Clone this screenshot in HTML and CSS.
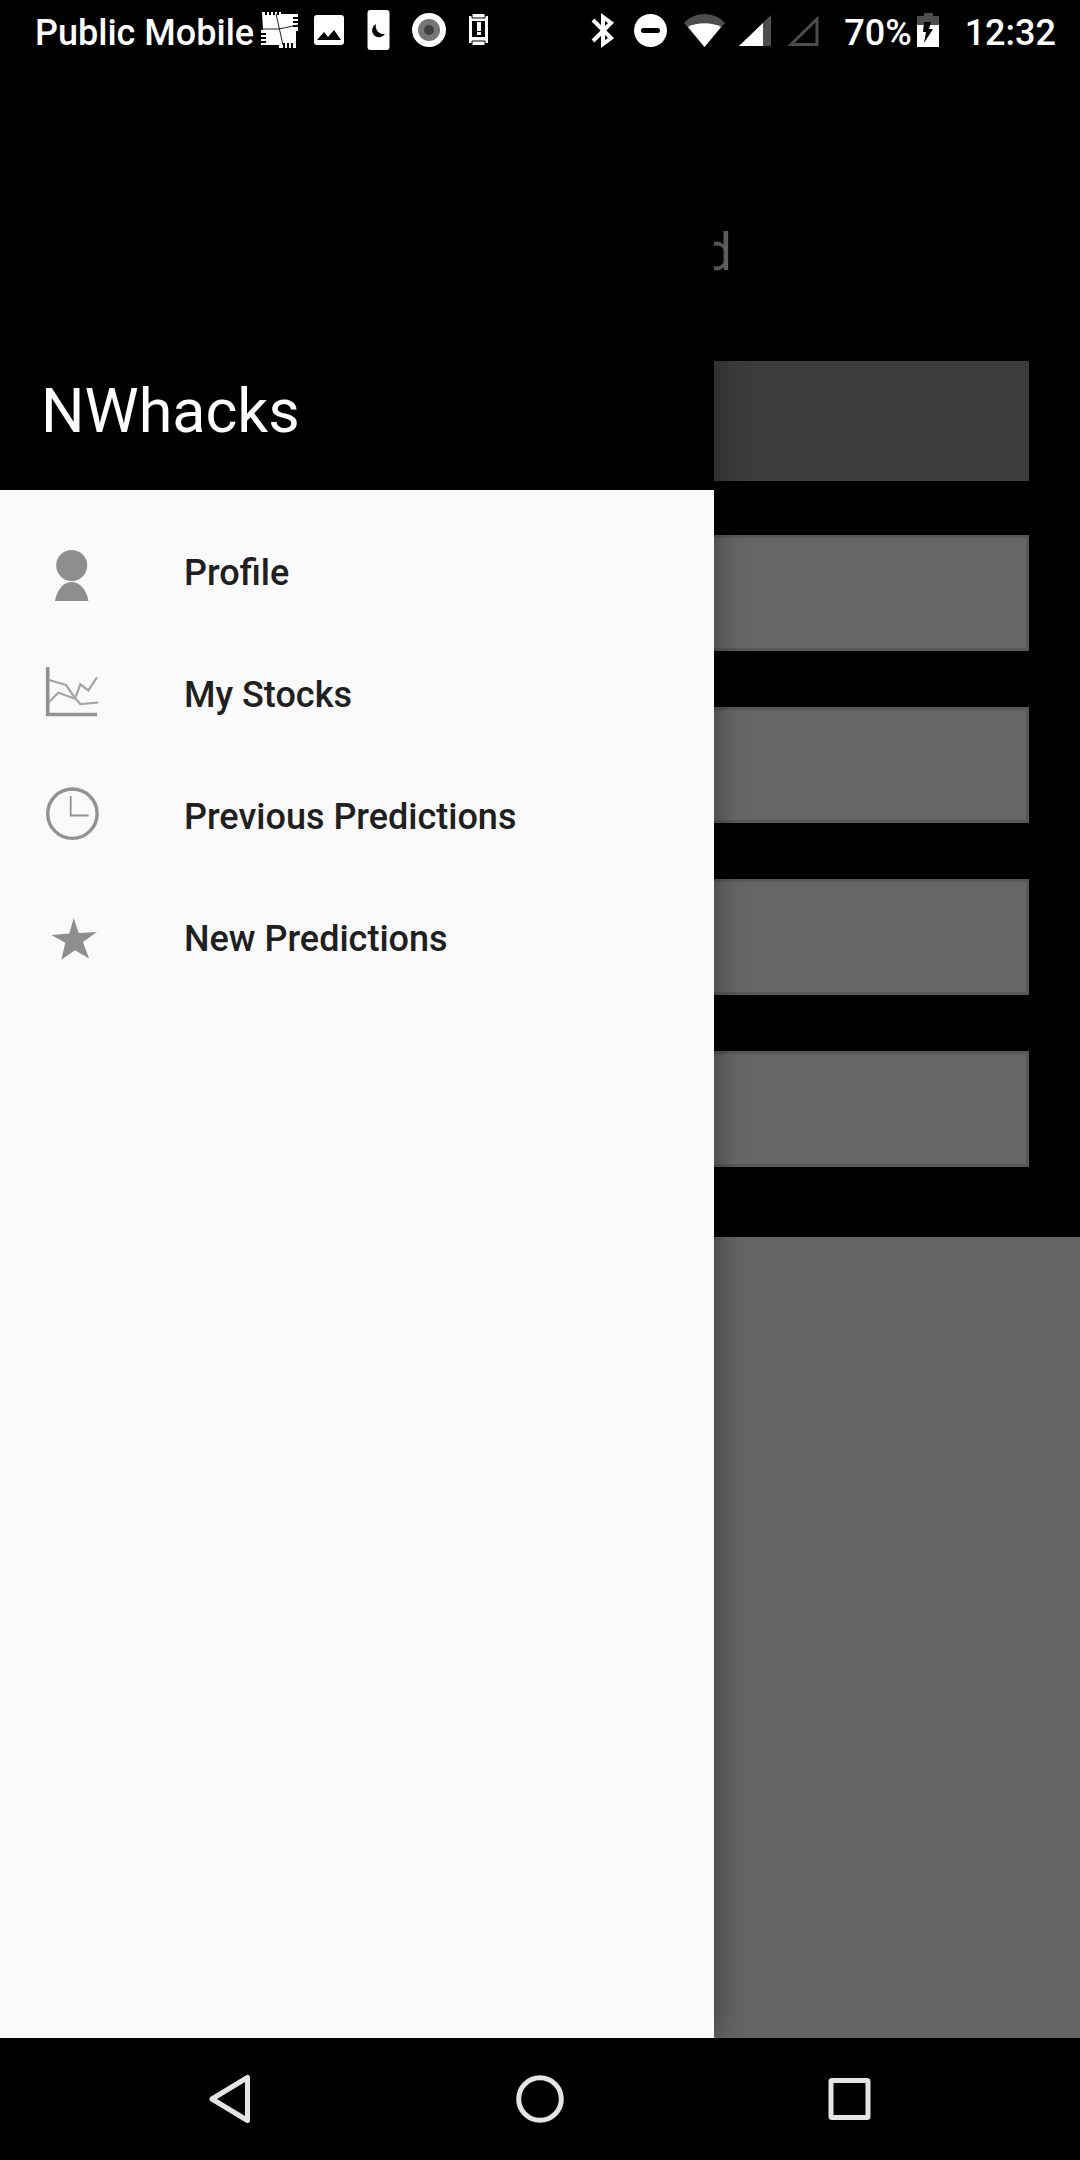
FILE: index.html
```html
<!DOCTYPE html>
<html lang="en">
<head>
<meta charset="utf-8">
<meta name="viewport" content="width=device-width, initial-scale=1">
<title>NWhacks</title>
<link rel="stylesheet" href="styles.css">
</head>
<body>
<header class="status">
  <div class="status-group">
    <span>Public Mobile</span>
    <svg class="status-icon" viewBox="254 0 50 64" aria-hidden="true">
      <path fill="#fff" d="M262 12h3v3h2v-3h2v3h2v-3h2v3h2v-3h2v3h2v-3h2v2h17v3h-5v2h5v2h-5v2h5v2h-5v2h5v4h-2v17h-3v-5h-2v5h-2v-5h-2v5h-2v-5h-2v5h-4v-3h-18v-2h5v-2h-5v-2h5v-2h-5v-2h5v-2h-5v-3h2z"/>
      <path fill="none" stroke="#222" d="M276 14l7 31M261 29h18l19-4"/>
    </svg>
    <svg class="status-icon" viewBox="304 0 50 64" aria-hidden="true">
      <rect x="314" y="15" width="30" height="30" rx="3" fill="#fff"/><path d="M317 40l7-8 4 5 6-7 7 10z"/>
    </svg>
    <svg class="status-icon" viewBox="354 0 50 64" aria-hidden="true">
      <rect x="367.500" y="10" width="22" height="40" rx="3" fill="#fff"/><path d="M376 24a7 7 0 1 0 9 10a8 8 0 0 1-9-10z"/>
    </svg>
    <svg class="status-icon" viewBox="404 0 50 64" aria-hidden="true">
      <circle cx="429" cy="30" r="17" fill="#fff"/><circle cx="429" cy="30" r="11" fill="#757575"/><circle cx="429" cy="30" r="5" fill="#404040"/>
    </svg>
    <svg class="status-icon" viewBox="454 0 50 64" aria-hidden="true">
      <path fill="#fff" d="M472 14h13v2h3v27h-3v2h-13v-2h-3v-27h3z"/>
      <path d="M472 21h13v16h-13z"/><path fill="none" stroke="#000" d="M472 14v4h13v-4M472 45v-4h13v4"/>
      <path fill="#fff" d="M477 22h4v9h-4zM477 32h4v3h-4z"/>
    </svg>
  </div>
  <div class="status-group">
    <svg class="status-icon" viewBox="578 0 50 64" aria-hidden="true">
      <path fill="none" stroke="#fff" stroke-width="4" d="M593 20l18 18-8 6V17l8 6-18 18"/>
    </svg>
    <svg class="status-icon" viewBox="628 0 50 64" aria-hidden="true">
      <circle cx="650.5" cy="30.500" r="16.500" fill="#fff"/><path stroke="#000" stroke-width="5" stroke-linecap="round" d="M643.500 30.500h14"/>
    </svg>
    <svg class="status-icon" viewBox="678 0 50 64" aria-hidden="true">
      <path fill="#4d4d4d" d="M684 23c11-12 30-12 41 0l-20.500 24z"/><path fill="#fff" d="M688 27c9-5 24-5 33 0l-16.500 20z"/>
    </svg>
    <svg class="status-icon" viewBox="728 0 50 64" aria-hidden="true">
      <path fill="#4d4d4d" d="M771 15v31h-32z"/><path fill="#fff" d="M763 23v23h-24z"/>
    </svg>
    <svg class="status-icon" viewBox="778 0 50 64" aria-hidden="true">
      <path fill="none" stroke="#4d4d4d" stroke-width="3" d="M817 19v25.500h-26z"/>
    </svg>
    <span class="battery">70%
      <svg class="battery-icon" viewBox="916 0 24 64" aria-hidden="true">
        <path fill="#4d4d4d" d="M924 13h9v3h6v10h-22v-10h7z"/><path fill="#fff" d="M917 25h22v22h-22z"/><path d="M924 22h7l-2 7h4l-9 14 2-11h-3z"/>
      </svg>
    </span>
    <time class="clock">12:32</time>
  </div>
</header>

<main class="screen">
  <form class="panel">
    <h1 class="panel-title">d</h1>
    <button class="panel-button" type="button" aria-label="Select"></button>
    <div class="fields">
      <input class="field" type="text" aria-label="Field 1">
      <input class="field" type="text" aria-label="Field 2">
      <input class="field" type="text" aria-label="Field 3">
      <input class="field" type="text" aria-label="Field 4">
    </div>
  </form>

  <aside class="drawer">
    <div class="drawer-header">NWhacks</div>
    <nav class="menu">
      <a class="menu-item" href="#profile">
        <svg class="menu-icon" viewBox="41 542 62 62" aria-hidden="true"><g fill="#8e8e8e"><circle cx="71.700" cy="565.500" r="15.500"/><path d="M55 601c2-12 9-19 16.500-19s15 7 17 19z"/></g></svg>
        <span>Profile</span>
      </a>
      <a class="menu-item" href="#stocks">
        <svg class="menu-icon" viewBox="41 664 62 62" aria-hidden="true"><g fill="none" stroke="#929292"><path stroke-width="3.600" d="M47.700 667v47.500H97"/><path stroke="#a4a4a4" stroke-width="2.200" d="M49 680l17 5 9 13 5.300 6 18-1.500M49 702l9.300-9.300 16.700 6 5.300-14.400 8 6 8.700-13"/></g></svg>
        <span>My Stocks</span>
      </a>
      <a class="menu-item" href="#previous">
        <svg class="menu-icon" viewBox="41 786 62 62" aria-hidden="true"><g fill="none" stroke="#929292"><circle cx="72.400" cy="813.700" r="24.700" stroke-width="3.400"/><path stroke-width="1.800" d="M70.700 796v19.500h18"/></g></svg>
        <span>Previous Predictions</span>
      </a>
      <a class="menu-item" href="#new">
        <svg class="menu-icon" viewBox="41 908 62 62" aria-hidden="true"><path fill="#8e8e8e" d="M73.700 918l5 15 18.300-1-14 10 6 16.500-14-8.200-13.700 9.400 4-17-14-7.700 18-1.500z"/></svg>
        <span>New Predictions</span>
      </a>
    </nav>
  </aside>
</main>

<footer class="navbar">
  <button class="nav-button" type="button" aria-label="Back">
    <svg class="nav-icon" viewBox="0 0 60 60" aria-hidden="true"><path d="M11 30l35.500-21.500v43z"/></svg>
  </button>
  <button class="nav-button" type="button" aria-label="Home">
    <svg class="nav-icon" viewBox="0 0 60 60" aria-hidden="true"><circle cx="30" cy="30" r="21.300"/></svg>
  </button>
  <button class="nav-button" type="button" aria-label="Recent apps">
    <svg class="nav-icon" viewBox="0 0 60 60" aria-hidden="true"><rect x="12" y="11.500" width="37" height="37" rx="1"/></svg>
  </button>
</footer>
</body>
</html>
```
FILE: styles.css
```css
:root {
  --drawer-width: min(714px, 85vw);
}

* {
  box-sizing: border-box;
}

body {
  margin: 0;
  min-height: 100vh;
  display: flex;
  flex-direction: column;
  background: #000;
  font-family: Roboto, "Liberation Sans", sans-serif;
}

.status {
  height: 64px;
  padding: 0 24px 0 35px;
  display: flex;
  justify-content: space-between;
  color: #fff;
  font-size: 36px;
  font-weight: 500;
  line-height: 66px;
  white-space: nowrap;
}

.status-group,
.battery {
  display: flex;
}

.status-icon {
  width: 50px;
  height: 64px;
}

.battery {
  gap: 4px;
  margin-left: 16px;
}

.battery-icon {
  width: 24px;
  height: 64px;
}

.clock {
  margin-left: 25px;
}

.screen {
  position: relative;
  flex: 1;
  overflow: hidden;
  background: #646464;
}

.panel {
  display: flex;
  flex-direction: column;
  padding: 159px 51px 70px;
  background: #000;
}

.panel-title {
  margin: 0 0 78px;
  padding-left: calc(var(--drawer-width) - 62px);
  color: #666;
  font-size: 51px;
  font-weight: 400;
  line-height: 60px;
}

.panel-button {
  height: 120px;
  margin-bottom: 54px;
  border: 0;
  background: #3c3c3c;
}

.fields {
  display: flex;
  flex-direction: column;
  gap: 56px;
}

.field {
  width: 100%;
  height: 116px;
  padding: 0 24px;
  border: 3px solid #585858;
  background: #666;
  color: #000;
  font: inherit;
  font-size: 36px;
}

.drawer {
  position: absolute;
  top: 0;
  bottom: 0;
  left: 0;
  width: var(--drawer-width);
  background: #fafafa;
  box-shadow: 0 0 30px rgba(0, 0, 0, 0.42);
}

.drawer-header {
  display: flex;
  align-items: flex-end;
  height: 426px;
  padding: 0 41px 43px;
  background: #000;
  color: #fff;
  font-size: 61px;
  line-height: 72px;
}

.menu {
  padding: 22px 0;
}

.menu-item {
  display: flex;
  align-items: center;
  gap: 81px;
  height: 122px;
  padding: 0 41px;
  color: #202020;
  font-size: 36px;
  font-weight: 500;
  text-decoration: none;
}

.menu-icon {
  flex: none;
  width: 62px;
  height: 62px;
}

.navbar {
  display: flex;
  height: 122px;
  padding: 0 76px;
}

.nav-button {
  flex: 1;
  display: flex;
  align-items: center;
  justify-content: center;
  padding: 0;
  border: 0;
  background: none;
}

.nav-icon {
  width: 60px;
  height: 60px;
  fill: none;
  stroke: #e4e4e4;
  stroke-width: 5;
  stroke-linejoin: round;
}
```
